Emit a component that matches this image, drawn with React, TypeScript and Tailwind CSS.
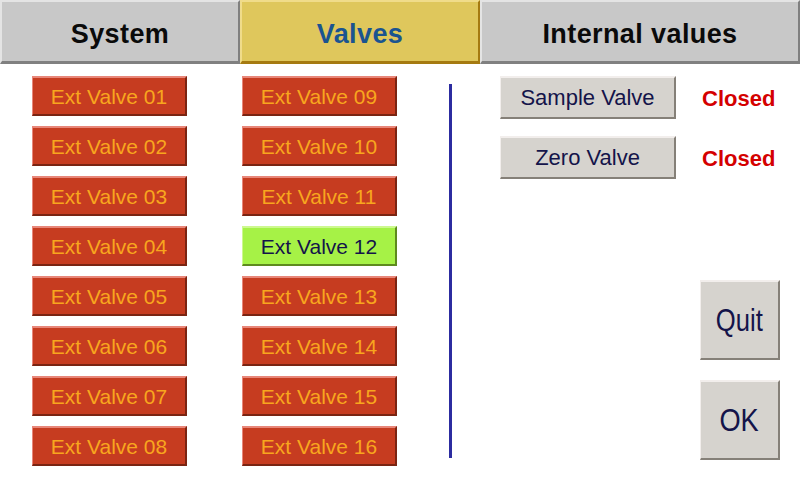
import React from 'react';

const tabs = [
  { label: 'System', width: 'w-[240px]', active: false },
  { label: 'Valves', width: 'w-[240px]', active: true },
  { label: 'Internal values', width: 'flex-1', active: false },
];

function ValveButton({ n, on }: { n: number; on?: boolean }) {
  const name = `Ext Valve ${String(n).padStart(2, '0')}`;
  return (
    <div
      className={
        on
          ? 'w-[155px] h-[40px] flex items-center justify-center bg-[#a6f246] text-[#14144a] border-t-2 border-l border-t-[#cdf890] border-l-[#cdf890] border-b-2 border-r-2 border-b-[#5e8a1e] border-r-[#5e8a1e]'
          : 'w-[155px] h-[40px] flex items-center justify-center bg-[#c63c20] text-[#f8a61e] border-t-2 border-l border-t-[#e8877a] border-l-[#e8877a] border-b-2 border-r-2 border-b-[#7a2412] border-r-[#7a2412]'
      }
      style={{ fontFamily: "'Liberation Sans', Arial, sans-serif" }}
    >
      <span className="text-[21px] leading-none">{name}</span>
    </div>
  );
}

function GrayButton({ children, className }: { children: React.ReactNode; className: string }) {
  return (
    <div
      className={`flex items-center justify-center bg-[#d6d3ce] text-[#14144a] border-t-2 border-l border-t-[#f2eeec] border-l-[#f2eeec] border-b-2 border-r-2 border-b-[#858078] border-r-[#858078] ${className}`}
      style={{ fontFamily: "'Liberation Sans', Arial, sans-serif" }}
    >
      {children}
    </div>
  );
}

export default function App() {
  return (
    <div className="w-[800px] h-[480px] bg-white overflow-hidden">
      {/* Tab bar */}
      <div className="flex h-[64px]">
        {tabs.map((t) => (
          <div
            key={t.label}
            className={
              t.active
                ? `${t.width} flex items-center justify-center pt-[5px] bg-[#dfc75c] text-[#1a5490] border-t-2 border-l-2 border-t-[#f0dc8a] border-l-[#f0dc8a] border-b-[3px] border-r-2 border-b-[#a57a10] border-r-[#a57a10]`
                : `${t.width} flex items-center justify-center pt-[5px] bg-[#c8c8c8] text-[#0a0a0a] border-t-2 border-l-2 border-t-[#e4e4e4] border-l-[#e4e4e4] border-b-[3px] border-r-2 border-b-[#808080] border-r-[#808080]`
            }
            style={{ fontFamily: "'Liberation Sans', Arial, sans-serif" }}
          >
            <span className="text-[27px] font-bold leading-none tracking-[0.4px]">{t.label}</span>
          </div>
        ))}
      </div>

      {/* Body */}
      <div className="flex pt-[12px] pl-[32px]">
        <div className="flex flex-col gap-[10px]">
          {[1, 2, 3, 4, 5, 6, 7, 8].map((n) => (
            <ValveButton key={n} n={n} />
          ))}
        </div>
        <div className="flex flex-col gap-[10px] ml-[55px]">
          {[9, 10, 11, 12, 13, 14, 15, 16].map((n) => (
            <ValveButton key={n} n={n} on={n === 12} />
          ))}
        </div>

        <div className="w-[3px] h-[374px] mt-[8px] ml-[52px] bg-[#2c2ca0]" />

        <div className="flex flex-col ml-[48px] flex-1 pr-[20px]">
          <div className="flex items-center">
            <GrayButton className="w-[176px] h-[43px]">
              <span className="text-[22px] leading-none">Sample Valve</span>
            </GrayButton>
            <span
              className="ml-[26px] pt-[3px] text-[22px] font-bold text-[#d40000] leading-none"
              style={{ fontFamily: "'Liberation Sans', Arial, sans-serif" }}
            >
              Closed
            </span>
          </div>
          <div className="flex items-center mt-[17px]">
            <GrayButton className="w-[176px] h-[43px]">
              <span className="text-[22px] leading-none">Zero Valve</span>
            </GrayButton>
            <span
              className="ml-[26px] pt-[3px] text-[22px] font-bold text-[#d40000] leading-none"
              style={{ fontFamily: "'Liberation Sans', Arial, sans-serif" }}
            >
              Closed
            </span>
          </div>

          <div className="flex flex-col items-end gap-[20px] mt-[101px]">
            <GrayButton className="w-[80px] h-[80px]">
              <span className="text-[32px] leading-none scale-x-[0.8]">Quit</span>
            </GrayButton>
            <GrayButton className="w-[80px] h-[80px]">
              <span className="text-[32px] leading-none scale-x-[0.85]">OK</span>
            </GrayButton>
          </div>
        </div>
      </div>
    </div>
  );
}
